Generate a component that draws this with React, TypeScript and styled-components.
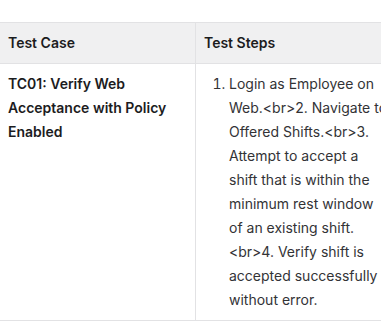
import * as React from 'react';
import styled, { createGlobalStyle } from 'styled-components';

const GlobalStyle = createGlobalStyle`
    html, body {
        margin: 0;
        padding: 0;
        background: #ffffff;
        overflow: hidden;
    }
    body {
        font-family: Inter, "Noto Sans", "Liberation Sans", sans-serif;
        font-size: 14px;
        color: #222;
    }
`;

const steps = [
    'Login as Employee on',
    'Web.<br>2. Navigate to',
    'Offered Shifts.<br>3.',
    'Attempt to accept a',
    'shift that is within the',
    'minimum rest window',
    'of an existing shift.',
    '<br>4. Verify shift is',
    'accepted successfully',
    'without error.'
];

export default class App extends React.Component<{}, any> {
    public render(): JSX.Element {
        return (
            <Page>
                <GlobalStyle />
                <Table>
                    <thead>
                        <tr>
                            <HeadCell $first>Test Case</HeadCell>
                            <HeadCell>Test Steps</HeadCell>
                        </tr>
                    </thead>
                    <tbody>
                        <tr>
                            <Cell $first>
                                <CaseName>TC01: Verify Web Acceptance with Policy Enabled</CaseName>
                            </Cell>
                            <Cell>
                                <Steps>
                                    <li>
                                        {steps.map((line, i) => (
                                            <StepLine key={i}>{line}</StepLine>
                                        ))}
                                    </li>
                                </Steps>
                            </Cell>
                        </tr>
                    </tbody>
                </Table>
            </Page>
        );
    }
}

const Page = styled.div`
    padding-top: 22px;
    width: 381px;
    overflow: hidden;
`;

const Table = styled.table`
    border-collapse: collapse;
    border-spacing: 0;
    table-layout: fixed;
    width: 420px;
    line-height: 24px;
`;

const HeadCell = styled.th<{ $first?: boolean }>`
    width: ${p => (p.$first ? '179px' : 'auto')};
    background: #f0f0f1;
    border-top: 1px solid #e2e2e4;
    border-bottom: 1px solid #e2e2e4;
    border-right: ${p => (p.$first ? '1px solid #e2e2e4' : 'none')};
    padding: 8px;
    text-align: left;
    font-weight: 600;
    color: #1c1c1e;
    vertical-align: top;
`;

const Cell = styled.td<{ $first?: boolean }>`
    border-bottom: 1px solid #e2e2e4;
    border-right: ${p => (p.$first ? '1px solid #e2e2e4' : 'none')};
    padding: 8px;
    vertical-align: top;
    color: #333336;
`;

const CaseName = styled.span`
    font-weight: 600;
    color: #1c1c1e;
`;

const Steps = styled.ol`
    margin: 0;
    padding-left: 25px;
`;

const StepLine = styled.span`
    display: block;
    white-space: nowrap;
`;
